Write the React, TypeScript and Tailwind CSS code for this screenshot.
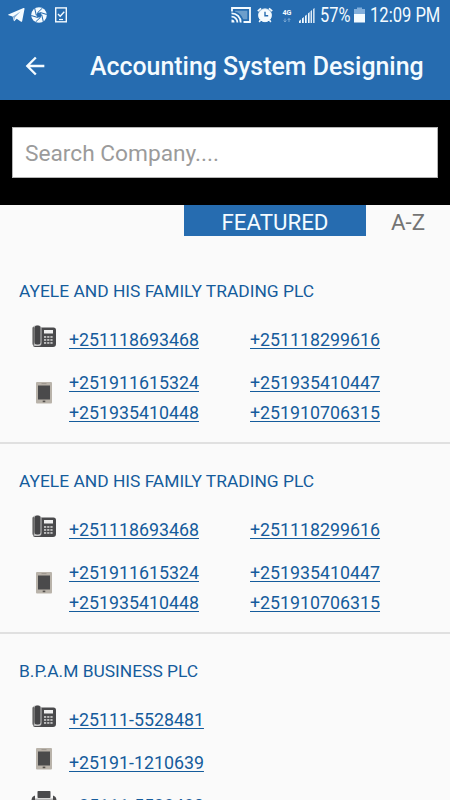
import { MdArrowBack } from "react-icons/md";

type Row = { kind: "phone" | "mobile" | "fax"; numbers: string[] };
type Company = { name: string; rows: Row[] };

const ayele: Company = {
  name: "AYELE AND HIS FAMILY TRADING PLC",
  rows: [
    { kind: "phone", numbers: ["+251118693468", "+251118299616"] },
    {
      kind: "mobile",
      numbers: ["+251911615324", "+251935410447", "+251935410448", "+251910706315"],
    },
  ],
};

const companies: Company[] = [
  ayele,
  ayele,
  {
    name: "B.P.A.M BUSINESS PLC",
    rows: [
      { kind: "phone", numbers: ["+25111-5528481"] },
      { kind: "mobile", numbers: ["+25191-1210639"] },
      { kind: "fax", numbers: ["+25111-5528480"] },
    ],
  },
];

function PhoneIcon() {
  return (
    <svg width="24" height="23" viewBox="0 0 24 23">
      <path d="M8 2.500h13.500Q24 2.500 24 5v14q0 3-3 3H3q-2 0-2-2V17h7z" fill="#4a4a4c" />
      <rect x="0.500" y="0.500" width="9" height="20.500" rx="3" fill="#c4c4c4" />
      <rect x="0.500" y="2" width="1.800" height="18" rx="0.900" fill="#666" />
      <rect x="2.500" y="0.500" width="6" height="19" rx="2.500" fill="#454547" />
      <rect x="12" y="5" width="9" height="3.500" fill="#f1f1f1" />
      {[11, 14, 17].map((y) =>
        [12, 15.2, 18.4].map((x) => (
          <rect key={`${x}-${y}`} x={x} y={y} width="2.200" height="1.900" fill="#bcbcbc" />
        )),
      )}
    </svg>
  );
}

function MobileIcon() {
  return (
    <svg width="16" height="22" viewBox="0 0 16 22">
      <rect width="16" height="21.500" rx="1" fill="#b9b3aa" />
      <rect x="2" y="3.500" width="12" height="14" fill="#4a4a4b" />
      <rect x="5.500" y="1.200" width="5" height="0.900" fill="#98928a" />
      <rect x="6.700" y="18.600" width="2.600" height="1.600" fill="#55524e" />
    </svg>
  );
}

function FaxIcon() {
  return (
    <svg width="26" height="24" viewBox="0 0 26 24">
      <path d="M4 4.500v4h18v-4q3.500 1 3.500 5v9h-25v-9Q0.500 5.500 4 4.500z" fill="#4a4a4c" />
      <rect x="5" y="0" width="16" height="10" fill="#fafafa" />
      <rect x="6.500" y="0" width="13" height="7" rx="0.800" fill="#4a4a4c" />
      <rect x="4" y="7.500" width="18" height="2.500" fill="#b5b5b5" />
      <rect x="6" y="14" width="14" height="9" fill="#4a4a4c" stroke="#fafafa" />
    </svg>
  );
}

const icons = { phone: PhoneIcon, mobile: MobileIcon, fax: FaxIcon };

function TelegramIcon() {
  return (
    <svg width="17" height="16" viewBox="0 0 17 16" fill="#f4fbff">
      <path d="M0.300 7.500L15.500 1q1.200-0.400 1 0.900L14.200 14q-0.300 1.300-1.500 0.600L8.700 11.700 6.500 14q-0.500 0.400-0.700-0.300L4.600 9.600 0.600 8.300Q-0.200 8 0.300 7.500z" />
      <path d="M4.900 9.500L12.500 4.500 7 10.300 6.300 13z" fill="#266cb0" opacity="0.550" />
    </svg>
  );
}

function ShutterIcon() {
  return (
    <svg width="16" height="16" viewBox="0 0 16 16">
      <circle cx="8" cy="8" r="7.800" fill="#f4fbff" />
      <g stroke="#266cb0" strokeWidth="1">
        {[0, 60, 120, 180, 240, 300].map((a) => (
          <path key={a} d="M6.500 5.700L11.500 1" transform={`rotate(${a} 8 8)`} />
        ))}
      </g>
      <path d="M6.600 5.600h2.800L10.800 8l-1.400 2.400H6.600L5.200 8z" fill="#266cb0" />
    </svg>
  );
}

function TaskIcon() {
  return (
    <svg width="12" height="16" viewBox="0 0 12 16" fill="none" stroke="#f4fbff">
      <rect x="0.700" y="0.900" width="10.600" height="13.900" strokeWidth="1.400" />
      <path d="M3 7l2.200 2.200L9.300 4.800" strokeWidth="1.400" />
      <path d="M4 12.500h4" strokeWidth="1.200" />
    </svg>
  );
}

function CastIcon() {
  return (
    <svg width="20" height="16" viewBox="0 0 20 16" fill="none" stroke="#f4fbff">
      <path d="M1 4.500V1h18v14h-6.500" strokeWidth="1.800" />
      <path d="M4 3.700h12.300v8.600h-4Q10 6 4 4.500z" fill="#f4fbff" fillOpacity="0.350" stroke="none" />
      <path d="M0.500 6.300A9 9 0 0 1 9.700 15.500M0.500 9.600A5.800 5.800 0 0 1 6.400 15.500" strokeWidth="1.800" />
      <path d="M0.500 12.500a3 3 0 0 1 3 3h-3z" fill="#f4fbff" stroke="none" />
    </svg>
  );
}

function AlarmIcon() {
  return (
    <svg width="16" height="16" viewBox="0 0 16 16" fill="none" stroke="#f4fbff">
      <circle cx="8" cy="8.300" r="6.400" fill="#f4fbff" />
      <path d="M0.800 4.200L4 1.400M15.200 4.200L12 1.400" strokeWidth="1.700" />
      <path d="M3.500 13l-1.300 2M12.500 13l1.300 2" strokeWidth="1.500" />
      <path d="M8 4.800v4h3.200" stroke="#266cb0" strokeWidth="1.400" />
    </svg>
  );
}

function NetworkIcon() {
  return (
    <svg width="10" height="16" viewBox="0 0 10 16" fill="none">
      <text x="0.500" y="8" fontSize="7.500" fontWeight="700" textLength="9" lengthAdjust="spacingAndGlyphs" fill="#f4fbff">4G</text>
      <path
        d="M3 11.500v3.500M1.700 13.500L3 15l1.300-1.500M7 15v-3.500M5.700 13L7 11.500 8.300 13"
        stroke="#7fabd6"
        strokeWidth="0.900"
      />
    </svg>
  );
}

function SignalIcon() {
  return (
    <svg width="16" height="15" viewBox="0 0 16 15" fill="#f4fbff">
      <path d="M0 15v-2l1.800-1.500V15zM3 15v-4.500L4.800 9v6zM6 15V8l1.700-1.600V15zM9 15V5.500L10.600 4v11z" />
      <path d="M11.600 15V3.200l1.300-1.200v13zM14.200 15V1L15.500 0v15z" />
    </svg>
  );
}

function BatteryIcon() {
  return (
    <svg width="11" height="16" viewBox="0 0 11 16">
      <path d="M3 0.500h5V2h3v5H0V2h3z" fill="#81aedb" />
      <path d="M0 7h11v8.500H0z" fill="#f4fbff" />
    </svg>
  );
}

function StatusBar() {
  return (
    <div className="flex h-[30px] items-center pl-2 text-[#f4fbff] [&>*]:shrink-0">
      <TelegramIcon />
      <div className="ml-1.5"><ShutterIcon /></div>
      <div className="ml-2"><TaskIcon /></div>
      <div className="ml-[164px]"><CastIcon /></div>
      <div className="ml-1.5"><AlarmIcon /></div>
      <div className="ml-[9px]"><NetworkIcon /></div>
      <div className="ml-[7px]"><SignalIcon /></div>
      <div className="ml-[5px] w-[30px] origin-left scale-x-[0.84] pt-0.5 text-[19.5px] whitespace-nowrap">57%</div>
      <div className="ml-1"><BatteryIcon /></div>
      <div className="ml-[5px] w-[70px] origin-left scale-x-[0.85] pt-0.5 text-[19.5px] whitespace-nowrap">12:09 PM</div>
    </div>
  );
}

function ContactRow({ row }: { row: Row }) {
  const Icon = icons[row.kind];
  return (
    <div className="flex">
      <div className={`flex w-[50px] shrink-0 justify-center ${row.numbers.length > 2 ? "pt-[14px]" : ""}`}>
        <Icon />
      </div>
      <div className="grid grid-cols-[181px_181px] text-[17.8px] leading-[30px]">
        {row.numbers.map((n) => (
          <a key={n} className="underline decoration-1 underline-offset-2">{n}</a>
        ))}
      </div>
    </div>
  );
}

function CompanyCard({ company }: { company: Company }) {
  return (
    <div className="flex flex-col border-b-2 border-[#e0e0e0] pt-[23px] pb-[14px] pl-[19px] text-[#155c9c]">
      <h2 className="mb-5 text-[17.4px] leading-7">{company.name}</h2>
      <div className="flex flex-col gap-[13px]">
        {company.rows.map((row) => (
          <ContactRow key={row.kind} row={row} />
        ))}
      </div>
    </div>
  );
}

export default function App() {
  return (
    <div className="h-[800px] w-[450px] overflow-hidden bg-[#fafafa] font-['Roboto',sans-serif]">
      <header className="h-[100px] bg-[#266cb0]">
        <StatusBar />
        <div className="flex h-[72px] items-center pl-[21px] text-[#f4fbff]">
          <MdArrowBack size={28} />
          <h1 className="ml-[41px] pt-px text-[24.9px] font-medium whitespace-nowrap">Accounting System Designing</h1>
        </div>
      </header>
      <div className="h-[105px] bg-black px-3 pt-[27px]">
        <input
          className="block h-[51px] w-full border border-[#b5b5b5] bg-white px-3 pt-0.5 text-[22.7px] placeholder:text-[#9b9b9b]"
          placeholder="Search Company...."
        />
      </div>
      <div className="flex h-[49px] items-start pl-[184px] text-[22.3px] leading-[34px]">
        <div className="h-[31px] w-[182px] bg-[#266cb0] text-center text-[#f4fbff]">FEATURED</div>
        <div className="ml-[25px] text-[#747474]">A-Z</div>
      </div>
      {companies.map((company, i) => (
        <CompanyCard key={i} company={company} />
      ))}
    </div>
  );
}
